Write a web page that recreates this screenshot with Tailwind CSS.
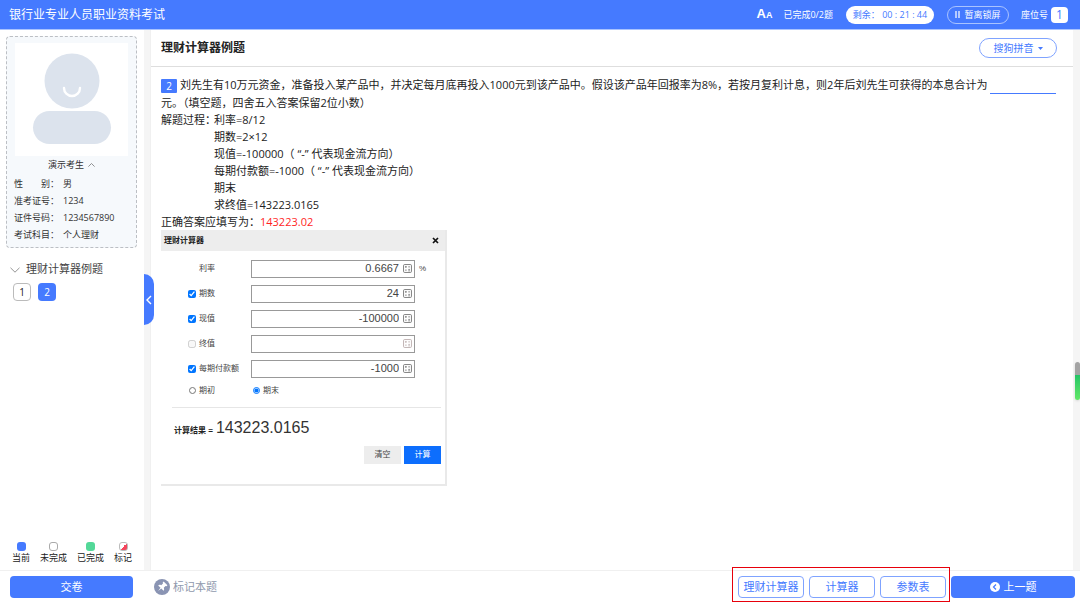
<!DOCTYPE html>
<html lang="zh-CN">
<head>
<meta charset="utf-8">
<meta name="viewport" content="width=device-width, initial-scale=1">
<title>银行业专业人员职业资料考试</title>
<script src="https://cdn.jsdelivr.net/npm/@tailwindcss/browser@4"></script>
</head>
<body class="flex h-screen flex-col overflow-hidden bg-white font-['Open_Sans','Noto_Sans_CJK_SC',sans-serif] text-[11px] text-[#222]">
<svg class="hidden" aria-hidden="true">
  <symbol id="calc" viewBox="0 0 10 10">
    <rect x="0.6" y="0.6" width="8.8" height="8.8" rx="1.2" fill="none" stroke="currentColor" stroke-width="0.9"/>
    <path d="M2.2 3.2h2M3.2 2.2v2M5.8 3.2h2M2.2 6.8h2M5.8 6h2M5.8 7.6h2" stroke="currentColor" stroke-width="0.8"/>
  </symbol>
</svg>

<header class="flex h-[30px] shrink-0 items-center border-b border-[#a9c3ff] bg-[#457aff] pr-3 pl-[9px] text-white">
  <h1 class="text-[12px]">银行业专业人员职业资料考试</h1>
  <button type="button" aria-label="字号" class="ml-auto">
    <span class="flex items-baseline font-['Liberation_Sans'] leading-4 font-bold"><span class="text-[13px]">A</span><span class="text-[9px]">A</span></span>
  </button>
  <span class="ml-[11px] text-[9px]">已完成0/2题</span>
  <span class="ml-[13px] flex h-[18px] w-[88px] items-center justify-center rounded-full bg-white text-[9px] whitespace-pre text-[#457aff]">剩余： 00 : 21 : 44</span>
  <button type="button" class="ml-[13px] flex h-[18px] w-[62px] items-center justify-center gap-1 rounded-full border border-[#a9c3ff] text-[9px]">
    <svg class="h-[7px] w-[5px]" viewBox="0 0 5 7"><path d="M1 0v7M4 0v7" stroke="currentColor" stroke-width="1.2"/></svg>暂离锁屏
  </button>
  <span class="ml-3 flex items-center gap-[3px] text-[9px]">座位号<b class="flex h-4 w-[17px] items-center justify-center rounded-sm bg-white text-[12px] font-normal text-[#457aff]">1</b></span>
</header>

<div class="relative flex min-h-0 flex-1">
  <aside class="flex w-36 shrink-0 flex-col">
    <section class="mt-[6px] mr-[7px] ml-[6px] rounded border border-dashed border-[#bcbfc4] bg-[#f6f9fc] pt-[6px] pb-1 text-[9px] text-[#333]">
      <div class="mx-auto w-[113px] bg-white">
        <svg class="block h-[113px] w-[113px]" viewBox="0 0 113 113">
          <circle cx="57" cy="38" r="27.5" fill="#dce3ed"/>
          <rect x="18" y="68" width="78" height="33" rx="16.5" fill="#dce3ed"/>
          <path d="M49 45a8 8 0 0 0 16 0" fill="none" stroke="#fff" stroke-width="2.4" stroke-linecap="round"/>
        </svg>
      </div>
      <button type="button" class="mx-auto mb-[2px] flex h-[17px] items-center gap-1">演示考生
        <svg class="h-1 w-[7px]" viewBox="0 0 7 4"><path d="M.4 3.6 3.5.5l3.1 3.1" fill="none" stroke="#777" stroke-width=".8"/></svg>
      </button>
      <dl class="grid grid-cols-[49px_1fr] pl-[7px] leading-[17px]">
        <dt class="flex justify-between pr-[4px]"><span>性</span><span>别：</span></dt><dd>男</dd>
        <dt>准考证号：</dt><dd>1234</dd>
        <dt>证件号码：</dt><dd>1234567890</dd>
        <dt>考试科目：</dt><dd>个人理财</dd>
      </dl>
    </section>
    <nav class="mt-[13px] pl-[10px]">
      <button type="button" class="flex h-[17px] items-center gap-[6px] text-[#444]">
        <svg class="h-[6px] w-[10px]" viewBox="0 0 10 6"><path d="M.5.8 5 5.2 9.500.8" fill="none" stroke="#888" stroke-width=".9"/></svg>理财计算器例题
      </button>
      <div class="mt-[5px] flex gap-[7px] pl-[3px] text-[10px]">
        <button type="button" class="h-[18px] w-[18px] rounded-sm border border-[#bbb]">1</button>
        <button type="button" class="h-[18px] w-[18px] rounded-sm bg-[#457aff] text-white">2</button>
      </div>
    </nav>
    <ul class="mt-auto mb-[7px] flex gap-[10px] pl-[12px] text-[9px] leading-[11px]">
      <li class="flex flex-col items-center gap-px"><i class="h-[9px] w-[9px] rounded-[3px] bg-[#457aff]"></i>当前</li>
      <li class="flex flex-col items-center gap-px"><i class="h-[9px] w-[9px] rounded-[3px] border border-[#aaa]"></i>未完成</li>
      <li class="flex flex-col items-center gap-px"><i class="h-[9px] w-[9px] rounded-[3px] bg-[#53d898]"></i>已完成</li>
      <li class="flex flex-col items-center gap-px"><i class="h-[9px] w-[9px] rounded-[3px] border border-[#bbb] bg-linear-to-br from-white from-50% to-[#f5455c] to-50%"></i>标记</li>
    </ul>
  </aside>

  <div class="w-[7px] shrink-0 border-r border-[#f0f0f0] bg-[#f5f5f5]"></div>
  <button type="button" aria-label="收起侧栏" class="absolute top-[244px] left-36 flex h-[51px] w-[10px] items-center justify-center rounded-r-[10px] bg-[#457aff]">
    <svg class="h-[10px] w-[6px]" viewBox="0 0 6 10"><path d="M5 1 1 5l4 4" fill="none" stroke="#fff" stroke-width="1.4"/></svg>
  </button>

  <main class="min-w-0 flex-1">
    <div class="flex h-[37px] items-center justify-between border-b border-[#dedede] pr-4 pl-[10px]">
      <h2 class="text-[12px] font-bold">理财计算器例题</h2>
      <button type="button" class="flex h-5 w-[78px] items-center justify-center gap-1 rounded-full border border-[#7fa3ff] text-[10px] text-[#457aff]">搜狗拼音
        <svg class="h-[3px] w-[5px]" viewBox="0 0 5 3"><path d="M0 0h5L2.500 3z" fill="currentColor"/></svg>
      </button>
    </div>
    <article class="pt-[9px] pr-4 pl-[10px] leading-[17px]">
      <p><span class="mr-[3px] inline-flex h-[14px] w-4 items-center justify-center rounded-[1px] bg-[#457aff] align-middle text-[10px] text-white">2</span><label for="blank">刘先生有10万元资金，准备投入某产品中，并决定每月底再投入1000元到该产品中。假设该产品年回报率为8%，若按月复利计息，则2年后刘先生可获得的本息合计为</label>
        <input id="blank" class="h-[15px] w-[66px] border-b border-[#457aff] align-middle outline-none"><br>元。（填空题，四舍五入答案保留2位小数）</p>
      <div class="grid grid-cols-[53px_1fr]">
        <span class="whitespace-nowrap">解题过程：</span>
        <div>
          <p>利率=8/12</p>
          <p>期数=2×12</p>
          <p>现值=-100000（ “-” 代表现金流方向）</p>
          <p>每期付款额=-1000（ “-” 代表现金流方向）</p>
          <p>期末</p>
          <p>求终值=143223.0165</p>
        </div>
      </div>
      <p>正确答案应填写为：<span class="text-[#ff1f1f]">143223.02</span></p>

      <form class="w-[286px] border-r-2 border-b-2 border-[#e9e9e9] pb-5 font-['Liberation_Sans','Noto_Sans_CJK_SC',sans-serif] text-[8px] text-[#444]">
        <div class="flex h-[21px] items-center justify-between bg-[#ededed] pr-[6px] pl-[3px] text-[#222]">
          <b>理财计算器</b>
          <button type="button" aria-label="关闭"><svg class="h-[7px] w-[7px]" viewBox="0 0 7 7"><path d="m1 1 5 5M6 1 1 6" stroke="#111" stroke-width="1.7"/></svg></button>
        </div>
        <div class="mt-[9px] grid grid-cols-[8px_1fr_164px_30px] items-center gap-y-[7px] pl-[27px]">
          <span></span><label for="rate" class="pl-[3px]">利率</label>
          <div class="flex h-[18px] items-center gap-1 border border-[#999] pr-[2px]"><input id="rate" value="0.6667" class="min-w-0 flex-1 text-right text-[11px] outline-none"><svg class="h-[9px] w-[9px] text-[#666]"><use href="#calc"/></svg></div>
          <span class="pl-1">%</span>

          <input id="c1" type="checkbox" checked class="h-2 w-2"><label for="c1" class="pl-[3px]">期数</label>
          <div class="flex h-[18px] items-center gap-1 border border-[#999] pr-[2px]"><input aria-label="期数" value="24" class="min-w-0 flex-1 text-right text-[11px] outline-none"><svg class="h-[9px] w-[9px] text-[#666]"><use href="#calc"/></svg></div>
          <span></span>

          <input id="c2" type="checkbox" checked class="h-2 w-2"><label for="c2" class="pl-[3px]">现值</label>
          <div class="flex h-[18px] items-center gap-1 border border-[#999] pr-[2px]"><input aria-label="现值" value="-100000" class="min-w-0 flex-1 text-right text-[11px] outline-none"><svg class="h-[9px] w-[9px] text-[#666]"><use href="#calc"/></svg></div>
          <span></span>

          <input id="c3" type="checkbox" disabled class="h-2 w-2"><label for="c3" class="pl-[3px]">终值</label>
          <div class="flex h-[18px] items-center gap-1 border border-[#999] pr-[2px]"><input aria-label="终值" class="min-w-0 flex-1 text-right text-[11px] outline-none"><svg class="h-[9px] w-[9px] text-[#b3a4a4]"><use href="#calc"/></svg></div>
          <span></span>

          <input id="c4" type="checkbox" checked class="h-2 w-2"><label for="c4" class="pl-[3px]">每期付款额</label>
          <div class="flex h-[18px] items-center gap-1 border border-[#999] pr-[2px]"><input aria-label="每期付款额" value="-1000" class="min-w-0 flex-1 text-right text-[11px] outline-none"><svg class="h-[9px] w-[9px] text-[#666]"><use href="#calc"/></svg></div>
          <span></span>
        </div>
        <div class="mt-[4px] flex pl-7">
          <label class="flex w-16 items-center gap-[3px]"><input type="radio" name="when" class="h-[7px] w-[7px]">期初</label>
          <label class="flex items-center gap-[3px]"><input type="radio" name="when" checked class="h-[7px] w-[7px]">期末</label>
        </div>
        <hr class="mt-2 mr-1 ml-[11px] border-[#e6e6e6]">
        <p class="mt-2 flex h-6 items-baseline gap-[3px] pl-[13px] leading-6"><b class="text-[#222]">计算结果 =</b><output class="text-[16px] text-[#333]">143223.0165</output></p>
        <div class="mt-[6px] mr-1 flex justify-end gap-[3px]">
          <button type="button" class="h-[18px] w-[37px] bg-[#ededed]">清空</button>
          <button type="button" class="h-[18px] w-[37px] bg-[#0d6efd] text-white">计算</button>
        </div>
      </form>
    </article>
  </main>
  <div class="w-[7px] shrink-0 bg-[#f5f5f5]"></div>
  <div class="absolute top-[332px] right-0 h-[38px] w-[5px] rounded-sm bg-linear-to-b from-[#a3a3a3] from-35% via-[#22c566] via-35% to-[#62e868] shadow"></div>
</div>

<footer class="flex h-[33px] shrink-0 items-center border-t border-[#f0f0f0] pr-[5px] pl-[10px]">
  <button type="button" class="h-[22px] w-[123px] rounded-sm bg-[#457aff] text-white">交卷</button>
  <button type="button" class="ml-[21px] flex items-center gap-[3px] text-[#8f99ad]">
    <svg class="h-4 w-4" viewBox="0 0 16 16"><circle cx="8" cy="8" r="8" fill="#8a94b3"/><g transform="rotate(45 8 8)" fill="#fff"><path d="M5.300 3h5.400v1.300l-.9.500v2.500c1.300.5 2 1.300 2 2.300H4.200c0-1 .7-1.800 2-2.300V4.800l-.9-.5z"/><path d="M7.400 9.500h1.200L8 13.500z"/></g></svg>标记本题
  </button>
  <div class="relative ml-auto flex gap-[5px]">
    <button type="button" class="h-[22px] w-[66px] rounded-sm border border-[#7fa3ff] text-[#457aff]">理财计算器</button>
    <button type="button" class="h-[22px] w-[66px] rounded-sm border border-[#7fa3ff] text-[#457aff]">计算器</button>
    <button type="button" class="h-[22px] w-[66px] rounded-sm border border-[#7fa3ff] text-[#457aff]">参数表</button>
    <span class="pointer-events-none absolute -top-[9px] -right-1 -bottom-[4px] -left-[6px] border border-red-600"></span>
  </div>
  <button type="button" class="ml-[5px] flex h-[22px] w-[124px] items-center justify-center gap-1 rounded-sm bg-[#457aff] text-white">
    <svg class="h-[10px] w-[10px]" viewBox="0 0 10 10"><circle cx="5" cy="5" r="5" fill="#fff"/><path d="M6 2.500 3.500 5 6 7.500" fill="none" stroke="#457aff" stroke-width="1.200"/></svg>上一题
  </button>
</footer>
</body>
</html>
